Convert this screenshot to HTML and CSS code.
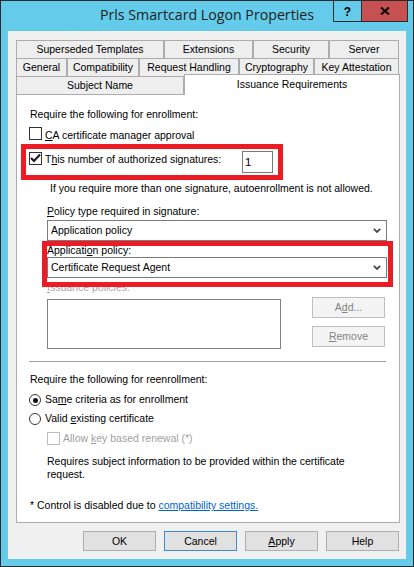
FILE: index.html
```html
<!DOCTYPE html>
<html>
<head>
<meta charset="utf-8">
<title>Prls Smartcard Logon Properties</title>
<link rel="stylesheet" href="styles.css">
</head>
<body>
<div class="window">
  <div class="titlebar">
    <div class="tb-left"></div>
    <div class="title">Prls Smartcard Logon Properties</div>
    <div class="tb-right">
      <div class="cap-btn cap-help">?</div>
      <div class="cap-btn cap-close">
        <svg width="10" height="8" viewBox="0 0 10 8"><path d="M1 0.5 L9 7.5 M9 0.5 L1 7.5" stroke="#000" stroke-width="2" fill="none"/></svg>
      </div>
    </div>
  </div>
  <div class="client">
    <div class="tabs">
      <div class="tab-row">
        <div class="tab t-superseded">Superseded Templates</div>
        <div class="tab t-extensions">Extensions</div>
        <div class="tab t-security">Security</div>
        <div class="tab t-server">Server</div>
      </div>
      <div class="tab-row">
        <div class="tab t-general">General</div>
        <div class="tab t-compat">Compatibility</div>
        <div class="tab t-request">Request Handling</div>
        <div class="tab t-crypto">Cryptography</div>
        <div class="tab t-keyatt">Key Attestation</div>
      </div>
      <div class="tab-row">
        <div class="tab t-subject">Subject Name</div>
        <div class="tab t-issuance selected">Issuance Requirements</div>
      </div>
    </div>
    <div class="panel">
      <div class="sec-label">Require the following for enrollment:</div>
      <div class="cb-row ca-row">
        <div class="checkbox"></div>
        <div class="cb-label"><u>C</u>A certificate manager approval</div>
      </div>
      <div class="sig-row">
        <div class="checkbox checked">
          <svg width="11" height="11" viewBox="0 0 11 11"><path d="M1 5 L4 8 L10 1.5" stroke="#1a1a1a" stroke-width="2.2" fill="none"/></svg>
        </div>
        <div class="cb-label sig-label">T<u>h</u>is number of authorized signatures:</div>
        <div class="sig-input">1</div>
      </div>
      <div class="note">If you require more than one signature, autoenrollment is not allowed.</div>
      <div class="field-label first"><u>P</u>olicy type required in signature:</div>
      <div class="select first-select">
        <span>Application policy</span>
        <svg class="chev" width="8" height="5" viewBox="0 0 8 5"><path d="M0.8 0.8 L4 4 L7.2 0.8" stroke="#4a4a4a" stroke-width="1.8" fill="none"/></svg>
      </div>
      <div class="field-label second">Applicati<u>o</u>n policy:</div>
      <div class="select">
        <span>Certificate Request Agent</span>
        <svg class="chev" width="8" height="5" viewBox="0 0 8 5"><path d="M0.8 0.8 L4 4 L7.2 0.8" stroke="#4a4a4a" stroke-width="1.8" fill="none"/></svg>
      </div>
      <div class="field-label disabled-label"><u>I</u>ssuance policies:</div>
      <div class="policy-row">
        <div class="listbox"></div>
        <div class="side-btns">
          <div class="btn-dis">A<u>d</u>d...</div>
          <div class="btn-dis"><u>R</u>emove</div>
        </div>
      </div>
      <div class="sep"></div>
      <div class="sec-label second-sec">Require the following for reenrollment:</div>
      <div class="radio-row first-radio">
        <div class="radio on"></div>
        <div class="radio-label">Sa<u>m</u>e criteria as for enrollment</div>
      </div>
      <div class="radio-row">
        <div class="radio"></div>
        <div class="radio-label">Valid <u>e</u>xisting certificate</div>
      </div>
      <div class="cb-row renew-row">
        <div class="checkbox dis"></div>
        <div class="cb-label dis-text">Allow <u>k</u>ey based renewal (*)</div>
      </div>
      <div class="info">Requires subject information to be provided within the certificate<br>request.</div>
      <div class="footnote">* Control is disabled due to <span class="link">compatibility settings.</span></div>

      <div class="mark mark-sig"></div>
      <div class="mark mark-app"></div>
    </div>
    <div class="actions">
      <div class="btn">OK</div>
      <div class="btn focused">Cancel</div>
      <div class="btn"><u>A</u>pply</div>
      <div class="btn">Help</div>
    </div>
  </div>
</div>
</body>
</html>
```

FILE: styles.css
```css
html, body {
  margin: 0;
  padding: 0;
  background: #64cbea;
}

.window {
  width: 414px;
  height: 567px;
  box-sizing: border-box;
  border: 1px solid #2b2b2b;
  background: #64cbea;
  display: flex;
  flex-direction: column;
  font-family: "Liberation Sans", Arial, sans-serif;
  font-size: 10.5px;
  line-height: 13px;
  color: #000;
}

u {
  text-decoration: underline;
  text-underline-offset: 1px;
}

/* title bar */
.titlebar {
  flex: none;
  height: 30px;
  display: grid;
  grid-template-columns: 1fr auto 1fr;
}

.title {
  font-family: "Open Sans", "Noto Sans", sans-serif;
  font-size: 14.2px;
  line-height: 18px;
  padding-top: 5px;
  color: #1e1e1e;
  white-space: nowrap;
}

.tb-right {
  display: flex;
  justify-content: flex-end;
  align-items: flex-start;
  padding-right: 5px;
}

.cap-btn {
  height: 21px;
  box-sizing: border-box;
  border: 1px solid #2b2b2b;
  border-top: none;
  display: flex;
  align-items: center;
  justify-content: center;
}

.cap-help {
  width: 28px;
  border-right: none;
  font-weight: bold;
  font-size: 12px;
  line-height: 12px;
  padding-top: 1px;
}

.cap-close {
  width: 47px;
  background: #c75050;
}

/* client area */
.client {
  flex: none;
  height: 528px;
  margin: 0 7px;
  box-sizing: border-box;
  background: #f0f0f0;
  padding: 9px 6px 0 8px;
  display: flex;
  flex-direction: column;
}

.tab-row {
  display: flex;
  height: 18px;
}

.tab {
  flex: none;
  box-sizing: border-box;
  height: 18px;
  border: 1px solid #acacac;
  border-bottom: none;
  background: #eeeeee;
  text-align: center;
  line-height: 17px;
  white-space: nowrap;
  overflow: hidden;
}

.t-superseded { width: 148px; }
.t-extensions { width: 89px; }
.t-security { width: 76px; }
.t-server { width: 70px; }
.t-general { width: 51px; }
.t-compat { width: 72px; }
.t-request { width: 100px; }
.t-crypto { width: 75px; }
.t-keyatt { width: 85px; }
.t-subject { width: 168px; }
.t-issuance { width: 216px; }

.tab.selected {
  height: 21px;
  margin-top: -2px;
  margin-bottom: -1px;
  background: #ffffff;
  line-height: 18px;
  position: relative;
  z-index: 1;
}

/* panel */
.panel {
  position: relative;
  flex: none;
  height: 429px;
  box-sizing: border-box;
  border: 1px solid #acacac;
  background: #ffffff;
  padding-left: 12px;
  display: flex;
  flex-direction: column;
  align-items: flex-start;
}

.sec-label {
  margin: 13px 0 0 1px;
  white-space: nowrap;
}

.sec-label.second-sec {
  margin-top: 11px;
}

.cb-row {
  display: flex;
  align-items: flex-start;
  height: 13px;
}

.ca-row {
  margin-top: 6px;
}

.checkbox {
  flex: none;
  width: 13px;
  height: 13px;
  box-sizing: border-box;
  border: 1px solid #333333;
  background: #ffffff;
  display: flex;
}

.checkbox.dis {
  border-color: #bcbcbc;
}

.cb-label {
  margin-left: 3px;
  margin-top: 2px;
  white-space: nowrap;
}

.sig-row {
  display: flex;
  align-items: flex-start;
  height: 22px;
  margin-top: 11px;
}

.sig-row .checkbox {
  margin-top: 1px;
}

.sig-label {
  flex: none;
  width: 197px;
}

.sig-input {
  flex: none;
  width: 31px;
  height: 22px;
  box-sizing: border-box;
  border: 1px solid #7a7a7a;
  padding-left: 2px;
  line-height: 20px;
  font-size: 11.5px;
  background: #ffffff;
}

.note {
  margin: 9px 0 0 21px;
  white-space: nowrap;
}

.field-label {
  margin: 10px 0 0 18px;
  white-space: nowrap;
}

.field-label.second {
  margin-top: 3px;
}

.field-label.disabled-label {
  margin-top: 3px;
  color: #a6a6a6;
}

.select {
  margin: 0 0 0 18px;
  width: 340px;
  height: 21px;
  box-sizing: border-box;
  border: 1px solid #7a7a7a;
  background: #ffffff;
  display: flex;
  align-items: center;
  justify-content: space-between;
  padding: 0 5px 0 3px;
  white-space: nowrap;
}

.select.first-select {
  margin-top: 2px;
}

.chev {
  display: block;
}

.policy-row {
  display: flex;
  align-items: flex-start;
  margin: 3px 0 0 18px;
  height: 52px;
}

.listbox {
  width: 234px;
  height: 50px;
  margin-top: 2px;
  box-sizing: border-box;
  border: 1px solid #828282;
  background: #ffffff;
}

.side-btns {
  margin-left: 31px;
  display: flex;
  flex-direction: column;
  gap: 8px;
}

.btn-dis {
  width: 73px;
  height: 21px;
  box-sizing: border-box;
  border: 1px solid #bfbfbf;
  background: #f4f4f4;
  color: #838383;
  display: flex;
  align-items: center;
  justify-content: center;
}

.sep {
  margin-top: 12px;
  width: 357px;
  height: 1px;
  background: #a0a0a0;
}

.radio-row {
  display: flex;
  align-items: flex-start;
  height: 13px;
  margin-top: 6px;
}

.radio-row.first-radio {
  margin-top: 7px;
}

.radio {
  flex: none;
  width: 12px;
  height: 12px;
  margin-top: 1px;
  box-sizing: border-box;
  border: 1px solid #333333;
  border-radius: 50%;
  background: #ffffff;
  display: flex;
  align-items: center;
  justify-content: center;
}

.radio.on::after {
  content: "";
  width: 5px;
  height: 5px;
  border-radius: 50%;
  background: #111111;
}

.radio-label {
  margin-left: 4px;
  white-space: nowrap;
}

.renew-row {
  margin: 7px 0 0 18px;
}

.renew-row .cb-label {
  margin-top: 0;
}

.dis-text {
  color: #a0a0a0;
}

.info {
  margin: 10px 0 0 18px;
  white-space: nowrap;
}

.footnote {
  margin: 18px 0 0 1px;
  white-space: nowrap;
}

.link {
  color: #0066cc;
  text-decoration: underline;
}

/* red annotation rectangles drawn over the dialog */
.mark {
  position: absolute;
  box-sizing: border-box;
  border: 5px solid #ed1c24;
}

.mark-sig {
  left: 4px;
  top: 49px;
  width: 262px;
  height: 36px;
}

.mark-app {
  left: 25px;
  top: 146px;
  width: 351px;
  height: 46px;
}

/* dialog buttons */
.actions {
  display: flex;
  justify-content: flex-end;
  gap: 8px;
  margin-top: 8px;
  padding-right: 1px;
}

.btn {
  width: 73px;
  height: 20px;
  box-sizing: border-box;
  border: 1px solid #adadad;
  background: #e1e1e1;
  display: flex;
  align-items: center;
  justify-content: center;
}

.btn.focused {
  border-color: #3f8bd3;
}
```
